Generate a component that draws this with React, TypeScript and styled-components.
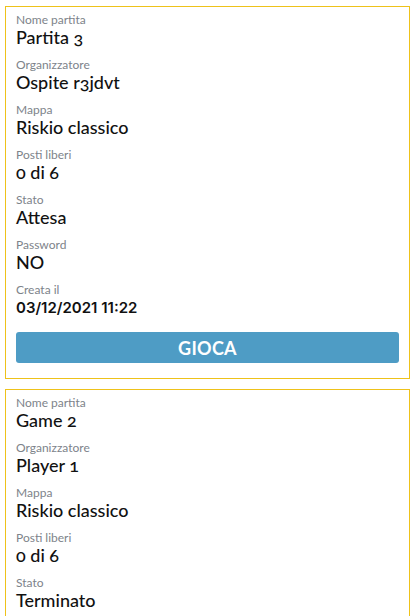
import React from "react";
import styled, { createGlobalStyle } from "styled-components";

const Global = createGlobalStyle`
  html, body { margin: 0; padding: 0; background: #ffffff; }
  body { font-family: "Lato", "Noto Sans", sans-serif; }
`;

const List = styled.div`
  display: flex;
  flex-direction: column;
  gap: 10px;
  padding: 6px 7px 0 5px;
`;

const Card = styled.section`
  border: 1px solid #eec21a;
  padding: 6px 10px 15px 10px;
  display: flex;
  flex-direction: column;
`;

const Field = styled.div`
  display: flex;
  flex-direction: column;
  margin-bottom: 10px;
`;

const Label = styled.span`
  font-size: 12px;
  line-height: 14px;
  color: #7d838a;
`;

const Value = styled.span<{ $date?: boolean }>`
  font-size: ${(p) => (p.$date ? "15px" : "18px")};
  font-weight: ${(p) => (p.$date ? 600 : 500)};
  line-height: 21px;
  color: #111111;
  font-variant-numeric: ${(p) => (p.$date ? "lining-nums" : "oldstyle-nums")};
  font-family: ${(p) => (p.$date ? '"Inter", "Lato", sans-serif' : "inherit")};
`;

const PlayButton = styled.button`
  margin-top: 4px;
  height: 31px;
  border: none;
  border-radius: 3px;
  background: #4e9cc5;
  color: #ffffff;
  font-family: "Lato", sans-serif;
  font-weight: 700;
  font-size: 18px;
  letter-spacing: 0.3px;
  padding: 0;
  cursor: pointer;
`;

type Game = {
  fields: [string, string][];
  date?: string;
  play?: boolean;
};

const games: Game[] = [
  {
    fields: [
      ["Nome partita", "Partita 3"],
      ["Organizzatore", "Ospite r3jdvt"],
      ["Mappa", "Riskio classico"],
      ["Posti liberi", "0 di 6"],
      ["Stato", "Attesa"],
      ["Password", "NO"],
    ],
    date: "03/12/2021 11:22",
    play: true,
  },
  {
    fields: [
      ["Nome partita", "Game 2"],
      ["Organizzatore", "Player 1"],
      ["Mappa", "Riskio classico"],
      ["Posti liberi", "0 di 6"],
      ["Stato", "Terminato"],
      ["Password", "NO"],
    ],
    date: "02/12/2021 18:05",
  },
];

export default function App() {
  return (
    <>
      <Global />
      <List>
        {games.map((g, i) => (
          <Card key={i}>
            {g.fields.map(([l, v]) => (
              <Field key={l}>
                <Label>{l}</Label>
                <Value>{v}</Value>
              </Field>
            ))}
            {g.date && (
              <Field>
                <Label>Creata il</Label>
                <Value $date>{g.date}</Value>
              </Field>
            )}
            {g.play && <PlayButton>GIOCA</PlayButton>}
          </Card>
        ))}
      </List>
    </>
  );
}
